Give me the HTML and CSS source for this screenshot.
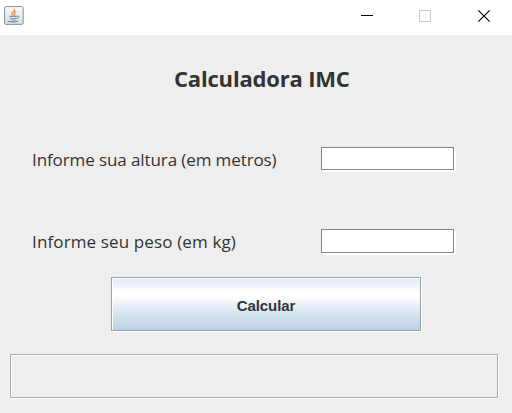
FILE: index.html
```html
<!DOCTYPE html>
<html lang="pt-BR">
<head>
<meta charset="utf-8">
<title>Calculadora IMC</title>
<link rel="stylesheet" href="styles.css">
</head>
<body>
<header class="titlebar">
  <svg class="app-icon" width="20" height="20" viewBox="0 0 20 20" fill="none">
    <defs><linearGradient id="tile" x1="0" y1="0" x2="0" y2="1"><stop offset="0" stop-color="#fafbfc"/><stop offset="1" stop-color="#d3dde5"/></linearGradient></defs>
    <rect x=".6" y=".6" width="18.6" height="17.8" rx="1.6" fill="url(#tile)" stroke="#84919b"/>
    <path d="M10.500 3C11.500 5 7 6 8 8L9.300 9.500M12.300 5.300C9.800 6.600 10 7.500 10.800 8.500L10 9.700" stroke="#e79a58" stroke-width="1.4"/>
    <path d="M5.200 10.300H12.800M6 12.300C8 13 10.500 13 12.500 12.300M13 10.200C15.600 9.600 15.600 11.600 13 12.300M3.700 15.200C7 16.200 11 16.200 14 15" stroke="#617f98" stroke-width="1"/>
    <path d="M6.500 14C8 14.500 10.500 14.500 12 14" stroke="#8ea4b5" stroke-width=".8"/>
  </svg>
  <svg class="controls" width="172" height="35" viewBox="0 0 172 35" fill="none" shape-rendering="crispEdges">
    <path d="M21 15.500H33" stroke="#000"/>
    <rect x="79.500" y="10.500" width="11" height="11" stroke="#ccc"/>
    <path d="M138.300 10.300L149.700 21.700M149.700 10.300L138.300 21.700" stroke="#000" stroke-width="1.100" shape-rendering="auto"/>
  </svg>
</header>
<main class="form">
  <h1 class="heading">Calculadora IMC</h1>
  <div class="row row-height">
    <label class="label label-height" for="altura">Informe sua altura (em metros)</label>
    <input class="field" id="altura" type="text">
  </div>
  <div class="row row-weight">
    <label class="label label-weight" for="peso">Informe seu peso (em kg)</label>
    <input class="field field-weight" id="peso" type="text">
  </div>
  <button class="calculate" type="button">Calcular</button>
  <div class="result"></div>
</main>
</body>
</html>
```
FILE: styles.css
```css
* { box-sizing: border-box; }
body {
  margin: 0;
  height: 413px;
  overflow: hidden;
  background: #eee;
  color: #333;
  font-family: "Open Sans", "Noto Sans", sans-serif;
}
.titlebar {
  display: flex;
  justify-content: space-between;
  height: 35px;
  background: #fff;
}
.app-icon { margin: 6px 0 0 4px; }
.form {
  display: flex;
  flex-direction: column;
  padding: 27px 14px 0 10px;
}
.heading {
  margin: 0 0 0 164px;
  height: 32px;
  font-size: 22px;
  line-height: 32px;
  font-weight: 700;
  letter-spacing: -0.18px;
  white-space: nowrap;
}
.row {
  display: flex;
  justify-content: space-between;
  height: 24px;
  padding: 0 44px 0 22px;
}
.row-height { margin-top: 53px; }
.row-weight { margin-top: 58px; }
.label {
  font-size: 17px;
  line-height: 26px;
  white-space: nowrap;
}
.label-height { letter-spacing: -0.1px; }
.label-weight { letter-spacing: 0.13px; }
.field {
  width: 133px;
  height: 23px;
  padding: 0 4px;
  border: 1px solid #7f8890;
  border-radius: 0;
  background: #fff;
  box-shadow: 2px 2px 0 #fff;
  outline: none;
}
.field-weight { height: 24px; }
.calculate {
  width: 310px;
  height: 54px;
  margin: 24px 0 0 101px;
  padding: 2px 0 0;
  border: 1px solid #98a1a9;
  border-radius: 0;
  background: linear-gradient(#e1eaf4 0%, #fff 29%, #fff 35%, #dbe7f2 64%, #bcd0e4 100%);
  box-shadow: inset 1px 1px 0 #fff, 1px 1px 0 #fff;
  color: #333;
  font: bold 15px "Liberation Sans", sans-serif;
  letter-spacing: -0.1px;
}
.result {
  height: 44px;
  margin-top: 23px;
  border: 1px solid #aaa;
  box-shadow: inset 1px 1px 0 #fff, 1px 1px 0 #fff;
}
```
